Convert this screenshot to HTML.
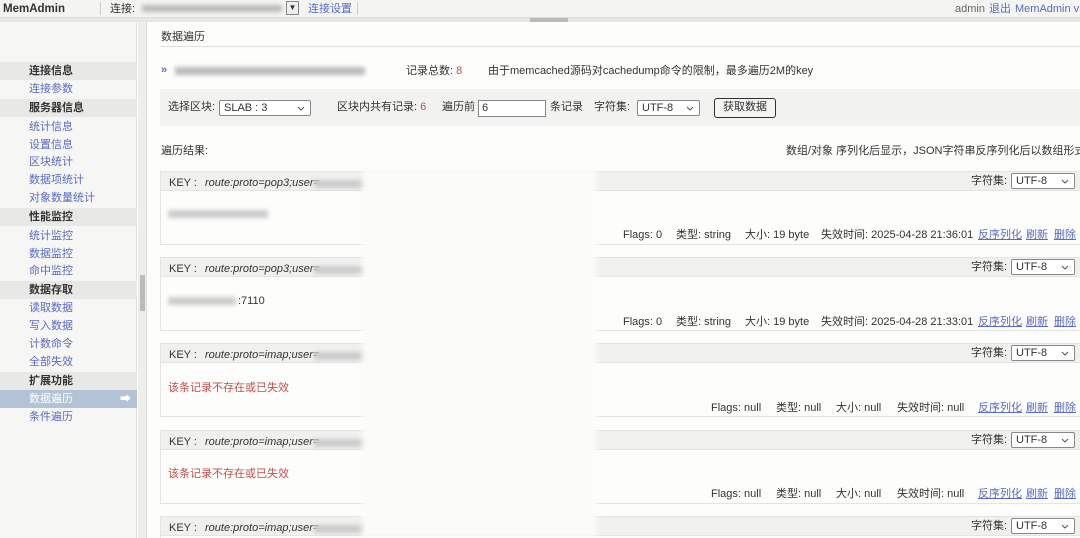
<!DOCTYPE html>
<html><head><meta charset="utf-8">
<style>
*{margin:0;padding:0;box-sizing:border-box}
html,body{width:1080px;height:538px;overflow:hidden}
body{background:#fdfdfb;font-family:"Liberation Sans","Noto Sans CJK SC",sans-serif;font-size:11px;line-height:14px;color:#333;position:relative}
.a{position:absolute;white-space:nowrap;line-height:14px}
.lk{color:#5a6bc0}
.u{text-decoration:underline}
.red{color:#c0504d}
.blur{background:#ccc;filter:blur(2px);height:8px;position:absolute}
.sb{position:absolute;left:0;width:137px;height:18px;line-height:18px;padding-left:29px;font-size:11px}
.sh{background:#e8e8e6;font-weight:bold;color:#333}
.si{color:#5a6bc0}
.sel2{position:absolute;height:16px;border:1px solid #888;background:#fff;font-size:11px;line-height:14px;padding-left:4px;border-radius:2px}
.sel2 svg{position:absolute;right:5px;top:5px}
.card{position:absolute;left:160px;width:930px;height:74px;border:1px solid #e4e4e2;background:#fdfdfb;overflow:hidden}
.card .h{height:19px;background:#f0f0ee;border-bottom:1px solid #e4e4e2;position:relative}
</style></head><body>
<div class="a" style="left:0;top:0;width:1080px;height:18px;background:#f4f4f2;border-bottom:1px solid #ddd"></div>
<div class="a" style="left:3px;top:2px;font-weight:bold;font-size:11.5px;color:#333">MemAdmin</div>
<div class="a" style="left:100px;top:2px;width:1px;height:13px;background:#ccc"></div>
<div class="a" style="left:110px;top:2px">连接:</div>
<div class="blur" style="left:142px;top:5px;width:140px;height:7px;background:#bbb"></div>
<div class="a" style="left:286px;top:1px;width:13px;height:14px;border:1px solid #888;background:#eee;font-size:8px;text-align:center;line-height:12px">▼</div>
<div class="a lk" style="left:308px;top:2px">连接设置</div>
<div class="a" style="left:357px;top:2px;width:1px;height:13px;background:#ccc"></div>
<div class="a" style="left:955px;top:2px;color:#666">admin</div>
<div class="a lk" style="left:989px;top:2px">退出</div>
<div class="a lk" style="left:1015px;top:2px">MemAdmin v1</div>
<div class="a" style="left:0;top:18px;width:1080px;height:4px;background:#e6e6e4"></div>
<div class="a" style="left:530px;top:18px;width:38px;height:4px;background:#bbb"></div>
<div class="a" style="left:0;top:22px;width:137px;height:516px;background:#f6f6f4;border-right:1px solid #e0e0de"></div>
<div class="a" style="left:138px;top:22px;width:9px;height:516px;background:#eeeeec;border-right:1px solid #ddd"></div>
<div class="a" style="left:140px;top:275px;width:5px;height:36px;background:#bbb"></div>
<div class="sb sh" style="top:62px">连接信息</div>
<div class="sb si" style="top:80px">连接参数</div>
<div class="sb sh" style="top:99px">服务器信息</div>
<div class="sb si" style="top:118px">统计信息</div>
<div class="sb si" style="top:136px">设置信息</div>
<div class="sb si" style="top:153px">区块统计</div>
<div class="sb si" style="top:171px">数据项统计</div>
<div class="sb si" style="top:189px">对象数量统计</div>
<div class="sb sh" style="top:208px">性能监控</div>
<div class="sb si" style="top:227px">统计监控</div>
<div class="sb si" style="top:245px">数据监控</div>
<div class="sb si" style="top:262px">命中监控</div>
<div class="sb sh" style="top:281px">数据存取</div>
<div class="sb si" style="top:299px">读取数据</div>
<div class="sb si" style="top:317px">写入数据</div>
<div class="sb si" style="top:335px">计数命令</div>
<div class="sb si" style="top:353px">全部失效</div>
<div class="sb sh" style="top:372px">扩展功能</div>
<div class="sb" style="top:390px;background:#b4c2d6;color:#fff">数据遍历<span style="position:absolute;right:6px;top:0">➡</span></div>
<div class="sb si" style="top:408px">条件遍历</div>
<div class="a" style="left:161px;top:30px">数据遍历</div>
<div class="a" style="left:160px;top:46px;width:920px;height:1px;background:#e0e0de"></div>
<div class="a" style="left:161px;top:63px;color:#5a6bc0;font-weight:bold">»</div>
<div class="blur" style="left:175px;top:67px;width:190px;background:#bbb"></div>
<div class="a" style="left:406px;top:64px">记录总数: <span class="red">8</span></div>
<div class="a" style="left:488px;top:64px">由于memcached源码对cachedump命令的限制，最多遍历2M的key</div>
<div class="a" style="left:160px;top:89px;width:920px;height:37px;background:#f2f2f0"></div>
<div class="a" style="left:168px;top:100px">选择区块:</div>
<div class="sel2" style="left:219px;top:100px;width:92px">SLAB : 3<svg width="8" height="5"><path d="M1 1l3 3 3-3" stroke="#555" fill="none"/></svg></div>
<div class="a" style="left:337px;top:100px">区块内共有记录: <span class="red">6</span></div>
<div class="a" style="left:442px;top:100px">遍历前</div>
<div class="a" style="left:478px;top:100px;width:68px;height:17px;border:1px solid #888;background:#fff;padding-left:3px;line-height:15px">6</div>
<div class="a" style="left:550px;top:100px">条记录</div>
<div class="a" style="left:594px;top:100px">字符集:</div>
<div class="sel2" style="left:637px;top:100px;width:63px">UTF-8<svg width="8" height="5"><path d="M1 1l3 3 3-3" stroke="#555" fill="none"/></svg></div>
<div class="a" style="left:714px;top:98px;width:62px;height:20px;border:1.5px solid #333;border-radius:3px;background:#f4f4f2;text-align:center;line-height:17px">获取数据</div>
<div class="a" style="left:161px;top:144px">遍历结果:</div>
<div class="a" style="left:786px;top:144px">数组/对象 序列化后显示，JSON字符串反序列化后以数组形式显示</div>

<div class="card" style="top:171px"><div class="h"></div></div>
<div class="card" style="top:257px"><div class="h"></div></div>
<div class="card" style="top:343px"><div class="h"></div></div>
<div class="card" style="top:430px"><div class="h"></div></div>
<div class="card" style="top:516px;height:22px;border-bottom:none"><div class="h"></div></div>

<div class="a" style="left:169px;top:176px">KEY :</div><div class="a" style="left:205px;top:176px"><i>route:proto=pop3;user=</i></div>
<div class="a" style="left:169px;top:262px">KEY :</div><div class="a" style="left:205px;top:262px"><i>route:proto=pop3;user=</i></div>
<div class="a" style="left:169px;top:348px">KEY :</div><div class="a" style="left:205px;top:348px"><i>route:proto=imap;user=</i></div>
<div class="a" style="left:169px;top:435px">KEY :</div><div class="a" style="left:205px;top:435px"><i>route:proto=imap;user=</i></div>
<div class="a" style="left:169px;top:521px">KEY :</div><div class="a" style="left:205px;top:521px"><i>route:proto=imap;user=</i></div>
<div class="blur" style="left:314px;top:180px;width:60px"></div>
<div class="blur" style="left:314px;top:266px;width:60px"></div>
<div class="blur" style="left:314px;top:352px;width:60px"></div>
<div class="blur" style="left:314px;top:439px;width:60px"></div>
<div class="blur" style="left:314px;top:525px;width:60px"></div>
<div class="blur" style="left:168px;top:210px;width:100px"></div>
<div class="blur" style="left:168px;top:297px;width:68px"></div>
<div class="a" style="left:238px;top:294px">:7110</div>
<div class="a red" style="left:168px;top:381px">该条记录不存在或已失效</div>
<div class="a red" style="left:168px;top:467px">该条记录不存在或已失效</div>

<div class="a" style="left:362px;top:168px;width:235px;height:370px;background:#fbfbf9;filter:blur(3px)"></div>

<div class="a" style="left:971px;top:174px">字符集:</div><div class="sel2" style="left:1011px;top:173px;width:64px">UTF-8<svg width="8" height="5"><path d="M1 1l3 3 3-3" stroke="#555" fill="none"/></svg></div>
<div class="a" style="left:971px;top:260px">字符集:</div><div class="sel2" style="left:1011px;top:259px;width:64px">UTF-8<svg width="8" height="5"><path d="M1 1l3 3 3-3" stroke="#555" fill="none"/></svg></div>
<div class="a" style="left:971px;top:346px">字符集:</div><div class="sel2" style="left:1011px;top:345px;width:64px">UTF-8<svg width="8" height="5"><path d="M1 1l3 3 3-3" stroke="#555" fill="none"/></svg></div>
<div class="a" style="left:971px;top:433px">字符集:</div><div class="sel2" style="left:1011px;top:432px;width:64px">UTF-8<svg width="8" height="5"><path d="M1 1l3 3 3-3" stroke="#555" fill="none"/></svg></div>
<div class="a" style="left:971px;top:519px">字符集:</div><div class="sel2" style="left:1011px;top:518px;width:64px">UTF-8<svg width="8" height="5"><path d="M1 1l3 3 3-3" stroke="#555" fill="none"/></svg></div>

<div class="a" style="left:623px;top:228px">Flags: 0</div><div class="a" style="left:676px;top:228px">类型: string</div><div class="a" style="left:745px;top:228px">大小: 19 byte</div><div class="a" style="left:821px;top:228px">失效时间: 2025-04-28 21:36:01</div>
<div class="a" style="left:623px;top:315px">Flags: 0</div><div class="a" style="left:676px;top:315px">类型: string</div><div class="a" style="left:745px;top:315px">大小: 19 byte</div><div class="a" style="left:821px;top:315px">失效时间: 2025-04-28 21:33:01</div>
<div class="a" style="left:711px;top:401px">Flags: null</div><div class="a" style="left:776px;top:401px">类型: null</div><div class="a" style="left:836px;top:401px">大小: null</div><div class="a" style="left:897px;top:401px">失效时间: null</div>
<div class="a" style="left:711px;top:487px">Flags: null</div><div class="a" style="left:776px;top:487px">类型: null</div><div class="a" style="left:836px;top:487px">大小: null</div><div class="a" style="left:897px;top:487px">失效时间: null</div>
<div class="a lk u" style="left:978px;top:228px">反序列化</div><div class="a lk u" style="left:1026px;top:228px">刷新</div><div class="a lk u" style="left:1054px;top:228px">删除</div>
<div class="a lk u" style="left:978px;top:315px">反序列化</div><div class="a lk u" style="left:1026px;top:315px">刷新</div><div class="a lk u" style="left:1054px;top:315px">删除</div>
<div class="a lk u" style="left:978px;top:401px">反序列化</div><div class="a lk u" style="left:1026px;top:401px">刷新</div><div class="a lk u" style="left:1054px;top:401px">删除</div>
<div class="a lk u" style="left:978px;top:487px">反序列化</div><div class="a lk u" style="left:1026px;top:487px">刷新</div><div class="a lk u" style="left:1054px;top:487px">删除</div>
</body></html>
